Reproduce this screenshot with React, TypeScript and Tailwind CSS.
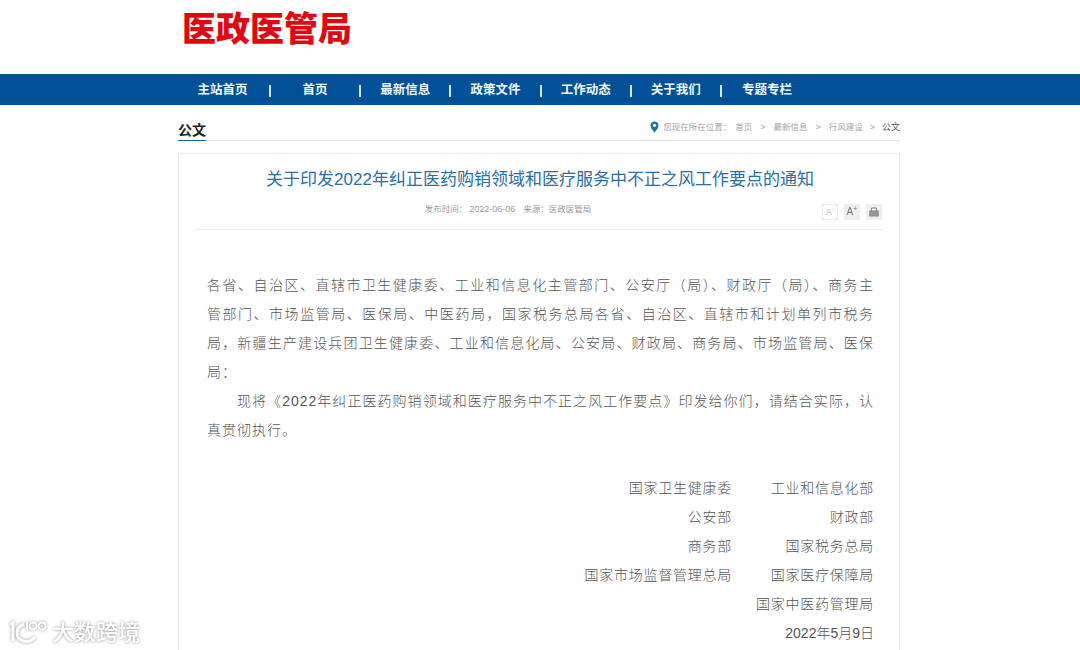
const cjk = "font-['Liberation_Sans','Noto_Sans_CJK_SC',sans-serif]";

const navItems = ["主站首页", "首页", "最新信息", "政策文件", "工作动态", "关于我们", "专题专栏"];

const bodyLines = [
  "各省、自治区、直辖市卫生健康委、工业和信息化主管部门、公安厅（局）、财政厅（局）、商务主",
  "管部门、市场监管局、医保局、中医药局，国家税务总局各省、自治区、直辖市和计划单列市税务",
  "局，新疆生产建设兵团卫生健康委、工业和信息化局、公安局、财政局、商务局、市场监管局、医保",
];

const signRows = [
  ["国家卫生健康委", "工业和信息化部"],
  ["公安部", "财政部"],
  ["商务部", "国家税务总局"],
  ["国家市场监督管理总局", "国家医疗保障局"],
  ["", "国家中医药管理局"],
];

export default function App() {
  return (
    <div className={`relative h-[650px] w-[1080px] overflow-hidden bg-white ${cjk}`}>
      {/* Logo */}
      <div className="h-[74px] pl-[182px] pt-[8px]">
        <div className="text-[34px] leading-[42px] font-black text-[#e1060f]">医政医管局</div>
      </div>

      {/* Nav */}
      <nav className="flex h-[31px] items-center bg-[#005197] pl-[176px]">
        {navItems.map((item, i) => (
          <div key={item} className={`flex h-full items-center ${i === 0 ? "w-[95px]" : "w-[90.2px]"}`}>
            <span className="flex-1 pt-[1px] text-center text-[12.5px] font-bold text-[#f2f7fb]">{item}</span>
            {i < navItems.length - 1 && <span className="mt-[2px] h-[12px] w-[2px] bg-[#d5e6f3]" />}
          </div>
        ))}
      </nav>

      <main className="mx-auto w-[722px] translate-x-[-1px]">
        {/* Crumb row */}
        <div className="flex h-[36px] items-end justify-between border-b border-[#e3e3e3]">
          <span className="-mb-px border-b border-[#1f5f9e] pt-[1px] text-[14px] leading-[20px] font-bold text-[#222]">公文</span>
          <div className="flex items-center pb-[6px] text-[8.5px] leading-[14px] text-[#a5a5a5]">
            <svg width="9" height="12" viewBox="0 0 9 12" className="mr-[4px]">
              <path d="M4.5 0.5C2.2 0.5 0.5 2.2 0.5 4.4 0.5 7 4.5 11.5 4.5 11.5S8.5 7 8.5 4.4C8.5 2.2 6.8 0.5 4.5 0.5Z" fill="#1f6fa8" />
              <circle cx="4.5" cy="4.3" r="1.6" fill="#fff" />
            </svg>
            <span>您现在所在位置：</span>
            <span className="ml-[4px]">首页</span>
            <span className="mx-[8px] text-[9px]">&gt;</span>
            <span>最新信息</span>
            <span className="mx-[8px] text-[9px]">&gt;</span>
            <span>行风建设</span>
            <span className="mx-[7px] text-[9px]">&gt;</span>
            <span className="text-[9px] text-[#555]">公文</span>
          </div>
        </div>

        {/* Article card */}
        <article className="mt-[12px] h-[600px] border border-[#ececec] px-[16px]">
          <h1 className="pt-[13px] pl-[2px] text-center text-[17px] leading-[26px] font-normal text-[#2a6ea6]">
            关于印发2022年纠正医药购销领域和医疗服务中不正之风工作要点的通知
          </h1>
          <div className="relative mt-[9px] flex h-[28px] justify-center border-b border-[#ececec] pr-[62px] text-[8.5px] leading-[14px] text-[#9a9a9a]">
            <span>发布时间：</span>
            <span className="ml-[2px] text-[9px]">2022-06-06</span>
            <span className="ml-[8px]">来源：</span>
            <span>医政医管局</span>
            <div className="absolute top-[2px] right-[1px] flex gap-[6px]">
              <span className="flex h-[16px] w-[16px] items-center justify-center border border-dashed border-[#e2e2e2] text-[9px] text-[#b5b5b5]">A<sup className="text-[6px]">-</sup></span>
              <span className="flex h-[16px] w-[16px] items-center justify-center bg-[#efefef] text-[10px] text-[#777]">A<sup className="text-[7px]">+</sup></span>
              <span className="flex h-[16px] w-[16px] items-center justify-center bg-[#efefef]">
                <svg width="10" height="10" viewBox="0 0 10 10" fill="none" stroke="#888" strokeWidth="1">
                  <path d="M2.5 4V1h5v3" />
                  <rect x="0.8" y="4" width="8.4" height="5" fill="#999" />
                </svg>
              </span>
            </div>
          </div>

          <div className="mt-[41px] ml-[12px] w-[667px] text-[14px] leading-[29.1px] font-light tracking-[1px] text-[#555]">
            {bodyLines.map((line) => (
              <p key={line} className="whitespace-nowrap [text-align-last:justify]">{line}</p>
            ))}
            <p>局：</p>
            <p className="indent-[30px] whitespace-nowrap [text-align-last:justify]">现将《2022年纠正医药购销领域和医疗服务中不正之风工作要点》印发给你们，请结合实际，认</p>
            <p>真贯彻执行。</p>

            <div className="mt-[28px] tracking-[0.75px]">
              {signRows.map(([left, right]) => (
                <div key={right} className="grid grid-cols-[525px_142px] text-right">
                  <span>{left}</span>
                  <span>{right}</span>
                </div>
              ))}
              <p className="text-right tracking-normal">2022年5月9日</p>
            </div>
          </div>
        </article>
      </main>

      {/* Watermark */}
      <div className="absolute top-[615px] left-[9px] flex items-center text-white [filter:drop-shadow(0_0_1.5px_#8f8f8f)]">
        <svg width="40" height="30" viewBox="0 0 40 30" fill="none" stroke="#fff" strokeWidth="2">
          <path d="M1 8l3-2v18" strokeWidth="3" />
          <path d="M15 7c-5 2-7 6-7 9 0 6 6 10 13 8 2-1 4-2 5-4" strokeWidth="3" />
          <path d="M18 5v8" />
          <circle cx="24" cy="9" r="3.6" />
          <circle cx="33" cy="9" r="3.6" />
        </svg>
        <span className="ml-[3px] pt-[3px] text-[22px] leading-[30px] font-medium">大数跨境</span>
      </div>
    </div>
  );
}
